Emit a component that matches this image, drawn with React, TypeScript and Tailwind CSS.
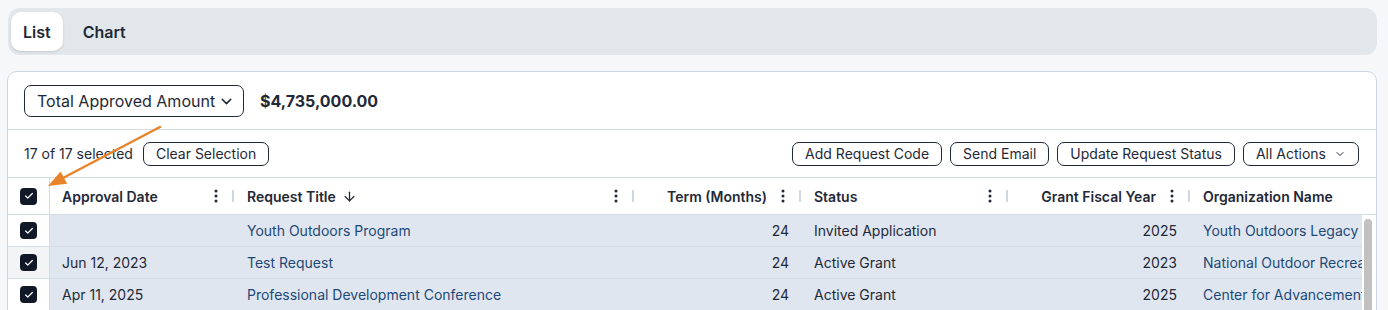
import React from "react";
import { ArrowDown, Check, ChevronDown } from "lucide-react";

const rows = [
  {
    date: "",
    title: "Youth Outdoors Program",
    term: 24,
    status: "Invited Application",
    year: 2025,
    org: "Youth Outdoors Legacy Fund",
  },
  {
    date: "Jun 12, 2023",
    title: "Test Request",
    term: 24,
    status: "Active Grant",
    year: 2023,
    org: "National Outdoor Recreation Alliance",
  },
  {
    date: "Apr 11, 2025",
    title: "Professional Development Conference",
    term: 24,
    status: "Active Grant",
    year: 2025,
    org: "Center for Advancement of Public Lands",
  },
];

const Kebab = () => (
  <svg width="4" height="14" viewBox="0 0 4 14" className="shrink-0">
    <circle cx="2" cy="2" r="1.5" fill="#1f2937" />
    <circle cx="2" cy="7" r="1.5" fill="#1f2937" />
    <circle cx="2" cy="12" r="1.5" fill="#1f2937" />
  </svg>
);

const Sep = () => <span className="w-[2px] h-[12px] bg-[#cfd8e3] shrink-0" />;

const Box = () => (
  <span className="w-[17px] h-[17px] rounded-[4px] bg-[#111827] flex items-center justify-center">
    <Check size={10} strokeWidth={3} color="white" />
  </span>
);

const OutlineBtn = ({ children }: { children: React.ReactNode }) => (
  <button className="h-[24px] px-3 rounded-[7px] border border-[#1f2937] text-[14px] text-[#1f2937] flex items-center gap-2 bg-white whitespace-nowrap">
    {children}
  </button>
);

const App = () => {
  return (
    <div className="relative min-h-screen bg-[#f6f7f9] pl-[7px] pr-[11px] pt-2 font-['Inter',sans-serif] text-[#1f2937]">
      <div className="ml-px h-[47px] rounded-[12px] bg-[#e2e7ec] flex items-center gap-2 pl-[3px]">
        <button className="h-[39px] px-3 rounded-[10px] bg-white shadow-sm text-[16px] font-semibold">
          List
        </button>
        <button className="h-[39px] px-3 rounded-[10px] text-[16px] font-semibold">
          Chart
        </button>
      </div>

      <div className="mt-4 rounded-[10px] border border-[#cbd5e1] bg-white overflow-hidden">
        <div className="flex items-center gap-4 px-4 pt-[13px] pb-[12px] border-b border-[#d3dbe5]">
          <button className="w-[220px] h-[32px] pl-3 pr-2 rounded-[7px] border border-[#1f2937] flex items-center justify-between text-[16px] whitespace-nowrap">
            Total Approved Amount
            <ChevronDown size={17} strokeWidth={2} />
          </button>
          <span className="text-[16px] font-bold">$4,735,000.00</span>
        </div>

        <div className="h-[48px] flex items-center justify-between pl-4 pr-[17px] border-b border-[#d3dbe5]">
          <div className="flex items-center gap-[10px]">
            <span className="text-[14px]">17 of 17 selected</span>
            <OutlineBtn>Clear Selection</OutlineBtn>
          </div>
          <div className="flex items-center gap-2">
            <OutlineBtn>Add Request Code</OutlineBtn>
            <OutlineBtn>Send Email</OutlineBtn>
            <OutlineBtn>Update Request Status</OutlineBtn>
            <OutlineBtn>
              All Actions
              <ChevronDown size={12} strokeWidth={2} />
            </OutlineBtn>
          </div>
        </div>

        <div className="flex h-[37px] border-b border-[#d3dbe5] text-[14px] font-semibold">
          <div className="w-[42px] shrink-0 flex items-center justify-center border-r border-[#d3dbe5]">
            <Box />
          </div>
          <div className="w-[185px] shrink-0 flex items-center pl-3 pr-px gap-[14px]">
            <span className="flex-1">Approval Date</span>
            <Kebab />
            <Sep />
          </div>
          <div className="w-[400px] shrink-0 flex items-center pl-3 pr-px gap-[14px]">
            <span className="flex-1 flex items-center gap-[6px]">
              Request Title <ArrowDown size={15} strokeWidth={2} />
            </span>
            <Kebab />
            <Sep />
          </div>
          <div className="w-[167px] shrink-0 flex items-center pr-px gap-[14px]">
            <span className="flex-1 text-right">Term (Months)</span>
            <Kebab />
            <Sep />
          </div>
          <div className="w-[207px] shrink-0 flex items-center pl-3 pr-px gap-[14px]">
            <span className="flex-1">Status</span>
            <Kebab />
            <Sep />
          </div>
          <div className="w-[182px] shrink-0 flex items-center pr-px gap-[14px]">
            <span className="flex-1 text-right">Grant Fiscal Year</span>
            <Kebab />
            <Sep />
          </div>
          <div className="flex-1 flex items-center pl-3 whitespace-nowrap overflow-hidden">
            Organization Name
          </div>
        </div>

        <div className="flex h-[200px]">
          <div className="flex-1 min-w-0">
            {rows.map((r, i) => (
              <div key={i} className="flex h-[32px] border-b border-[#d3dbe5] text-[14px]">
                <div
                  className={`w-[42px] shrink-0 flex items-center justify-center border-r border-[#d3dbe5] ${
                    i === 1 ? "bg-[#f3f4f5]" : "bg-white"
                  }`}
                >
                  <Box />
                </div>
                <div className="flex-1 min-w-0 flex items-center bg-[#e0e6ef] whitespace-nowrap">
                  <div className="w-[185px] shrink-0 pl-3">{r.date}</div>
                  <div className="w-[400px] shrink-0 pl-3 text-[#1c4a78]">{r.title}</div>
                  <div className="w-[167px] shrink-0 pr-[13px] text-right">{r.term}</div>
                  <div className="w-[207px] shrink-0 pl-3">{r.status}</div>
                  <div className="w-[182px] shrink-0 pr-[14px] text-right">{r.year}</div>
                  <div className="flex-1 min-w-0 pl-3 overflow-hidden text-[#1c4a78]">{r.org}</div>
                </div>
              </div>
            ))}
          </div>
          <div className="w-[14px] shrink-0 pt-1 pl-[2px]">
            <div className="w-[8px] h-[180px] rounded-full bg-[#c1c1c1]" />
          </div>
        </div>
      </div>

      <svg
        className="absolute left-0 top-0 pointer-events-none"
        width="1388"
        height="310"
        viewBox="0 0 1388 310"
      >
        <line x1="160" y1="127" x2="62" y2="178.5" stroke="#e8832a" strokeWidth="2.5" strokeLinecap="round" />
        <polygon points="48,186 60.6,171.4 67.2,183.8" fill="#e8832a" />
      </svg>
    </div>
  );
};

export default App;
